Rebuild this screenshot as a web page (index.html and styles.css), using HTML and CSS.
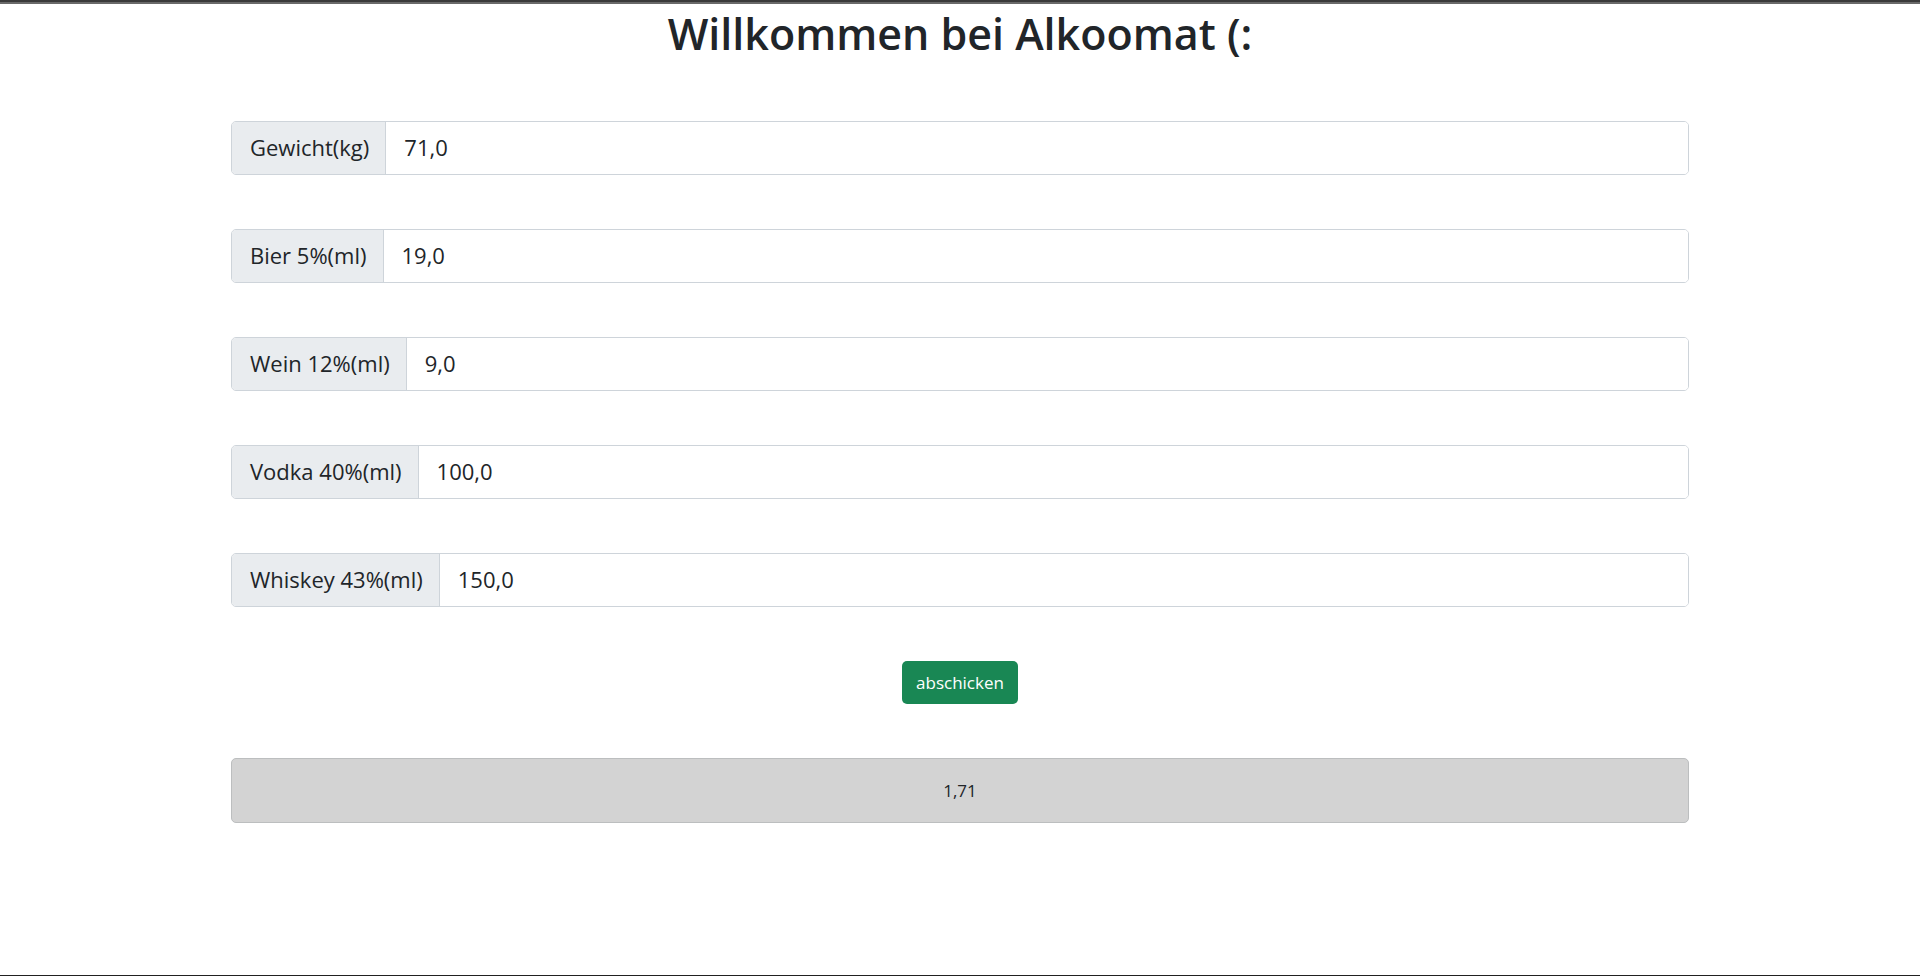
FILE: index.html
```html
<!DOCTYPE html>
<html lang="de">
<head>
<meta charset="utf-8">
<meta name="viewport" content="width=device-width, initial-scale=1">
<title>Alkoomat</title>
<link rel="stylesheet" href="styles.css">
</head>
<body>
<main class="page">
  <h1 class="title">Willkommen bei Alkoomat (:</h1>
  <form class="form">
    <div class="input-group">
      <label class="input-label" for="gewicht">Gewicht(kg)</label>
      <input class="input-field" id="gewicht" type="text" value="71,0">
    </div>
    <div class="input-group">
      <label class="input-label" for="bier">Bier 5%(ml)</label>
      <input class="input-field" id="bier" type="text" value="19,0">
    </div>
    <div class="input-group">
      <label class="input-label" for="wein">Wein 12%(ml)</label>
      <input class="input-field" id="wein" type="text" value="9,0">
    </div>
    <div class="input-group">
      <label class="input-label" for="vodka">Vodka 40%(ml)</label>
      <input class="input-field" id="vodka" type="text" value="100,0">
    </div>
    <div class="input-group">
      <label class="input-label" for="whiskey">Whiskey 43%(ml)</label>
      <input class="input-field" id="whiskey" type="text" value="150,0">
    </div>
    <button class="submit" type="button">abschicken</button>
    <output class="result">1,71</output>
  </form>
</main>
</body>
</html>
```
FILE: styles.css
```css
* {
  box-sizing: border-box;
}

body {
  margin: 0;
  background: #fff;
  color: #212529;
  font-family: "Segoe UI", "Open Sans", "Noto Sans", sans-serif;
  font-size: 17px;
}

.page {
  min-height: 100vh;
  padding: 0 24px;
  border-top: 2px solid #3a3a3a;
  border-bottom: 1px solid #212121;
  box-shadow: inset 0 2px #696969;
}

.title {
  margin: 0;
  padding-top: 5px;
  font-size: 43px;
  font-weight: 600;
  line-height: 54px;
  text-align: center;
}

.form {
  display: flex;
  flex-direction: column;
  gap: 54px;
  max-width: 1458px;
  margin: 60px auto 0;
}

.input-group {
  display: flex;
  height: 54px;
  border: 1px solid #ced4da;
  border-radius: 5px;
  overflow: hidden;
  font-size: 22px;
}

.input-label {
  display: flex;
  align-items: center;
  padding: 0 16px 2px 18px;
  background: #e9ecef;
  border-right: 1px solid #ced4da;
  white-space: nowrap;
}

.input-field {
  flex: 1;
  min-width: 0;
  padding: 0 18px 2px;
  border: 0;
  outline: 0;
  background: #fff;
  color: inherit;
  font: inherit;
}

.submit {
  align-self: center;
  height: 43px;
  padding: 0 14px 1px;
  border: 0;
  border-radius: 5px;
  background: #198754;
  color: #fff;
  font: inherit;
}

.result {
  padding: 18px;
  border: 1px solid #bcbebf;
  border-radius: 5px;
  background: #d3d3d3;
  line-height: 27px;
  text-align: center;
}
```
